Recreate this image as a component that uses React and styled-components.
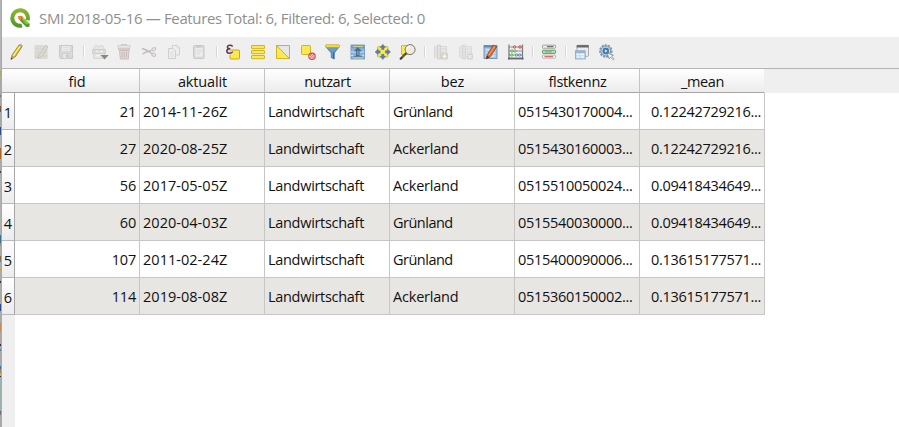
import React from "react";
import styled, { createGlobalStyle } from "styled-components";

const GlobalStyle = createGlobalStyle`
  * { box-sizing: border-box; }
  html, body { margin: 0; padding: 0; background: #fff; overflow: hidden; }
`;

const Screen = styled.div`
  display: flex;
  width: 899px;
  height: 427px;
  background: #fff;
  color: #111;
  font-family: "Open Sans", "Noto Sans", sans-serif;
  font-size: 14.5px;
  overflow: hidden;
`;

const Backdrop = styled.div`
  flex: none;
  width: 2px;
  border-right: 1px solid #a9a9a9;
  background: linear-gradient(
    #b4b4b4 0 71px, #b3a94e 71px 76px, #a9a9a9 76px 95px, #777 95px 97px, #a9a9a9 97px 106px,
    #96502f 106px 109px, #36679b 109px 112px, #a9a9a9 112px 127px, #264d86 127px 135px, #b0b0b0 135px 148px,
    #ad6424 148px 159px, #aaa 159px 171px, #444 171px 173px, #b0b0b0 173px 235px, #316f9f 235px 243px,
    #c08a55 243px 246px, #aaa 246px 256px, #9b6537 256px 259px, #4b85aa 259px 262px, #aaa 262px 268px,
    #c3a06a 268px 271px, #aaa 271px 281px, #333 281px 283px, #aaa 283px 304px, #254d94 304px 311px,
    #aaa 311px 323px, #c58b51 323px 332px, #aaa 332px 344px, #333 344px 346px, #aaa 346px 349px,
    #4d84a9 349px 351px, #aaa 351px 366px, #38719b 366px 369px, #bd8144 369px 373px, #aaa 373px 376px,
    #333 376px 377px, #9fb0b0 377px 411px, #3b6d96 411px 413px, #a86c45 413px 415px, #aaa 415px
  );
`;

const Window = styled.div`
  flex: 1;
  display: flex;
  flex-direction: column;
  min-width: 0;
`;

const TitleBar = styled.header`
  display: flex;
  align-items: center;
  flex: none;
  height: 37px;
  padding: 0 0 1px 8px;
  gap: 9px;
  color: #8f8f8f;
  svg { display: block; }
`;

const Title = styled.span`
  font-size: 15px;
  letter-spacing: -0.35px;
  white-space: pre;
`;

const Toolbar = styled.div`
  display: flex;
  align-items: center;
  flex: none;
  height: 31px;
  padding: 0 2px 2px;
  background: #efefef;
`;

const ToolButton = styled.button`
  display: grid;
  place-items: center;
  width: 25px;
  height: 24px;
  padding: 0 1px 0 0;
  border: 0;
  background: none;
  opacity: ${(p) => (p.$dim ? 0.75 : 1)};
  svg { display: block; overflow: visible; }
`;

const Separator = styled.span`
  width: 2px;
  height: 11px;
  margin: 0 2px 0 4px;
  border-left: 1px solid #d6d6d6;
  background: #fff;
`;

const Table = styled.div`
  flex: 1;
  display: flex;
  flex-direction: column;
  border-top: 1px solid #b4b4b4;
`;

const HeaderRow = styled.div`
  display: grid;
  grid-template-columns: 138px repeat(5, 125px) 1fr;
  flex: none;
  height: 24px;
  background: #efefef;
`;

const HeaderCell = styled.div`
  display: flex;
  align-items: center;
  justify-content: center;
  padding: 2px 0 0 ${(p) => (p.$first ? 13 : 1)}px;
  border-right: 1px solid ${(p) => (p.$last ? "#eee" : "#c4c4c4")};
  border-bottom: 1px solid #a6a6a6;
  background: linear-gradient(#fff, #ececec);
  line-height: 20px;
  letter-spacing: ${(p) => p.$track}px;
`;

const Body = styled.div`
  flex: 1;
  display: flex;
  flex-direction: column;
`;

const Row = styled.div`
  display: grid;
  grid-template-columns: 13px repeat(6, 125px);
  flex: none;
  width: 763px;
  height: 37px;
  background: ${(p) => (p.$alt ? "#e8e6e2" : "#fff")};
`;

const RowNumber = styled.div`
  display: flex;
  align-items: center;
  justify-content: center;
  padding-top: 3px;
  border-right: 1px solid #a6a6a6;
  border-bottom: 1px solid #b8b8b8;
  background: linear-gradient(#fff, #ececec);
`;

const Cell = styled.div`
  display: flex;
  align-items: center;
  justify-content: ${(p) => (p.$right ? "flex-end" : "flex-start")};
  padding: 1px 3px 0;
  border-right: 1px solid #c6c6c6;
  border-bottom: 1px solid #c6c6c6;
  letter-spacing: ${(p) => p.$track}px;
  white-space: nowrap;
`;

const RowGutter = styled.div`
  flex: 1;
  width: 13px;
  background: #efefef;
`;

const Y = "#fce94f";
const YB = "#c4a000";

const Icon = ({ children }) => (
  <svg width="16" height="16" viewBox="0 0 16 16" fill="none">{children}</svg>
);

const icons = {
  pencil: (
    <Icon>
      <path d="M3 15.5 4 11 11 1l3 1.6L7 13Z" fill="#e8d23a" stroke="#85752c" strokeWidth=".7" />
      <path d="m5.2 12.2 7-10" stroke="#fff388" strokeWidth="1" />
      <path d="m7 13 6.6-10" stroke="#a89125" strokeWidth=".8" />
      <path d="m11 1 1-1 2.5 1.3-.5 1.3Z" fill="#c8c8c8" stroke="#888" strokeWidth=".5" />
      <path d="m3 15.5.8-4 3 1.5Z" fill="#aaa28a" />
      <path d="m2.8 15.8.5-2.2 1.2.7Z" fill="#333" />
    </Icon>
  ),
  multiEdit: (
    <Icon>
      <path d="M1.5 2.5h12M1.5 6.5h13M1.5 10.5h13M1.5 13.5h13" stroke="#d6d4c8" strokeWidth="3" />
      <path d="M1.5 4.5h12M1.5 8.5h13M1.5 12h13" stroke="#c5c3b8" strokeWidth=".8" />
      <path d="m5 14.5 1-3.5 7-9.5 2 1.3L8 13Z" fill="#dcd6d0" stroke="#b2aaa5" strokeWidth=".8" />
    </Icon>
  ),
  save: (
    <Icon>
      <path d="M1.5 1.5h13v13h-12l-1-1Z" fill="#cfd0d1" stroke="#bbb" />
      <path d="M4 2h8v5H4Z" fill="#ececec" /><path d="M5 3.5h6M5 5.5h6" stroke="#d0d0d0" strokeWidth=".7" />
      <path d="M4.5 9.5h7v5h-7Z" fill="#e3e3e3" stroke="#bbb" strokeWidth=".6" /><path d="M8.5 10.5h2v3h-2Z" fill="#aaa" />
      <path d="m10 12 3-4 2 1.2-3 4Z" fill="#d9d4ce" />
    </Icon>
  ),
  addFeature: (
    <Icon>
      <path d="M3 4c0-3 4-3 5-1 1-2 5-2 5 1v2H3Z" fill="#e4e3df" stroke="#c7c6c2" strokeWidth=".7" />
      <path d="M1.5 5.5h13v4h-13Z" fill="#d4d3cf" stroke="#bdbcb8" strokeWidth=".7" />
      <path d="M2.5 9.5h11v5h-11Z" fill="#e3e2de" stroke="#c4c3bf" strokeWidth=".7" />
      <path d="M5 7.5h2m2 0h3M5 11.5h4" stroke="#f4f4f4" strokeWidth="1.4" />
      <path d="M9.5 11h8.2l-4.1 4.6Z" fill="#66655f" />
    </Icon>
  ),
  trash: (
    <Icon>
      <path d="M2 3.5V1.8h12v1.7M5.5 1.5V.5h5v1" stroke="#c7c0ba" strokeWidth="1.1" />
      <path d="M2.5 4h11v2h-11Z" fill="#dbc8c1" stroke="#b9a7a0" strokeWidth=".6" />
      <path d="M3.5 6.5h9.5l-.7 8.5h-8Z" fill="#e3d3d0" stroke="#b6a5a1" strokeWidth=".8" />
      <path d="M6 7.5v6M8.2 7.5v6M10.5 7.5v6" stroke="#b6a3a0" strokeWidth="1" />
    </Icon>
  ),
  cut: (
    <Icon>
      <path d="M1 4.5c3 .6 6.5 2.5 10 5.3M1.5 10c3-2 6-2.8 9-3.5" stroke="#aeaeae" strokeWidth="1.3" />
      <ellipse cx="12.7" cy="5.2" rx="2" ry="1.4" transform="rotate(-25 12.7 5.2)" stroke="#beb0ae" strokeWidth="1.1" />
      <ellipse cx="12.7" cy="10.8" rx="2" ry="1.5" transform="rotate(30 12.7 10.8)" stroke="#beb0ae" strokeWidth="1.1" />
    </Icon>
  ),
  copy: (
    <Icon>
      <path d="M6.5 1.5h4.5l2.5 2.5v7h-7Z" fill="#eee" stroke="#c9c9c9" />
      <path d="M2.5 4.5H7L9.5 7v7.5h-7Z" fill="#eee" stroke="#c3c3c3" />
      <path d="M4 8h4M4 10h4M4 12h4M11 1.5V4h2.5" stroke="#cfcfcf" strokeWidth=".7" />
    </Icon>
  ),
  paste: (
    <Icon>
      <rect x="2.5" y="1.5" width="10.5" height="13" rx="1" fill="#d4d4d1" stroke="#bdbcb9" />
      <path d="M4.5 4h7v8.5h-7Z" fill="#eee" /><path d="M5.5 1h4.8v2.5H5.5Z" fill="#bcbcba" />
      <path d="M5.5 6h5M5.5 8h5M5.5 10h3" stroke="#c9c9c9" strokeWidth=".8" />
    </Icon>
  ),
  expression: (
    <Icon>
      <rect x="6" y="6" width="9.5" height="9" rx="1" fill={Y} stroke={YB} strokeWidth=".9" />
      <path d="M8.7 2.4C6.8.7 3.5 1 3.4 3c0 1.4 1.5 1.8 3 1.8-2 0-3.6.6-3.6 2.4 0 2.4 4.3 2.7 6 .4" stroke="#f5f0ed" strokeWidth="3" />
      <path d="M8.7 2.4C6.8.7 3.5 1 3.4 3c0 1.4 1.5 1.8 3 1.8-2 0-3.6.6-3.6 2.4 0 2.4 4.3 2.7 6 .4" stroke="#5d345f" strokeWidth="1.5" />
    </Icon>
  ),
  selectAll: (
    <Icon>{[1.5, 6.5, 11.5].map((y) => <rect key={y} x="2.5" y={y} width="13" height="3.2" rx=".5" fill={Y} stroke="#cdae18" strokeWidth=".9" />)}</Icon>
  ),
  invert: (
    <Icon>
      <path d="M2.5 1.5h13v13Z" fill="#e6e6e6" stroke="#a4a4a4" strokeWidth=".9" />
      <path d="M2.5 1.5v13h13Z" fill={Y} stroke="#cdae18" strokeWidth=".9" />
    </Icon>
  ),
  deselect: (
    <Icon>
      <rect x="2.5" y="1.5" width="9" height="9" rx=".8" fill={Y} stroke="#cdae18" strokeWidth=".9" />
      <circle cx="13" cy="12.3" r="3.2" fill="#fbd8d8" stroke="#da3f48" strokeWidth="1.1" />
      <path d="m10.8 14.5 4.4-4.4M10.8 12l2-2M13 14.6l2.2-2.3" stroke="#da3f48" strokeWidth=".9" />
    </Icon>
  ),
  filter: (
    <Icon>
      <path d="M2 3h13l-4.7 6v6l-3-1.3V9Z" fill="#6a9bc9" stroke="#456f9e" strokeWidth=".8" />
      <path d="M9.5 8v6" stroke="#3c6796" />
      <rect x="1.5" y=".8" width="14" height="2.6" rx=".8" fill="#f7e23f" stroke="#b29d25" strokeWidth=".7" />
    </Icon>
  ),
  moveTop: (
    <Icon>
      <rect x="2" y="1" width="13.5" height="14" fill="#8cb2d8" stroke="#6d96bd" strokeWidth=".8" />
      <rect x="2" y="1" width="13.5" height="3.2" fill="#709dc8" /><path d="M4 2.5h10" stroke="#dfe077" strokeWidth=".8" />
      <path d="M2 8h13M2 11.5h13" stroke="#d6e4f1" strokeWidth=".9" />
      <path d="M4 14h10" stroke="#e6dc6a" strokeWidth=".8" />
      <path d="m8.8 3 4 4.2h-2.3v4.3h2.5v1.3H4.6v-1.3H7V7.2H4.8Z" fill="#466f96" />
      <path d="M7.8 8h2m-2 2h2" stroke="#e5eff8" strokeWidth=".6" />
    </Icon>
  ),
  pan: (
    <Icon>
      <rect x="3.5" y="2.5" width="10.5" height="10.5" rx="1" fill={Y} stroke="#cdae18" strokeWidth=".8" />
      <path d="m8.8.3 2.8 3.2H10v2H7.6v-2H6ZM8.8 15.5l2.8-3.2H10v-2H7.6v2H6ZM1 7.9l3.2-2.8v1.6h2v2.4h-2v1.6ZM16.6 7.9l-3.2-2.8v1.6h-2v2.4h2v1.6Z" fill="#5681ae" stroke="#4a709b" strokeWidth=".4" />
    </Icon>
  ),
  zoomSel: (
    <Icon>
      <path d="M2.5 1.5h8v9h-8Z" fill={Y} stroke="#cdae18" strokeWidth=".8" />
      <path d="m7.2 9.3-5.5 5.4" stroke="#37352f" strokeWidth="2.2" strokeLinecap="round" />
      <path d="m3 13.5 3-3" stroke="#b59b5b" strokeWidth=".8" />
      <circle cx="11.1" cy="5.6" r="5" fill="#eeeae0" stroke="#77756f" />
      <path d="M8 5a3.5 3.5 0 0 1 3-2.7" stroke="#fff" />
    </Icon>
  ),
  newField: (
    <Icon>
      <path d="M2.5 2.5h12v11h-12Z" fill="#e7e6e4" stroke="#d0d0cd" /><path d="M5.5 1h3v14h-3Z" fill="#dedcd2" stroke="#c5c3ba" strokeWidth=".8" />
      <path d="M3 5h2M3 8h2M3 11h2M9 5h5M9 8h5" stroke="#d0cfca" />
      <rect x="9" y="9" width="7" height="6.5" rx="1" fill="#ccc8b7" /><path d="M12.5 10v4.5M10.3 12.3h4.4m-3.7-1.6 3 3m0-3-3 3" stroke="#fff" strokeWidth=".8" />
    </Icon>
  ),
  deleteField: (
    <Icon>
      <path d="M2.5 2.5h12v11h-12Z" fill="#e7e7e7" stroke="#d5d5d5" /><path d="M5.5 1h3v14h-3Z" fill="#dedede" stroke="#cbcbcb" strokeWidth=".8" />
      <path d="M3 5h2M3 8h2M3 11h2M9 5h5M9 8h5" stroke="#d5d5d5" />
      <rect x="10" y="9.5" width="6" height="6" rx="1" fill="#d1c9c7" /><path d="m11.5 11 3 3m0-3-3 3" stroke="#fff" />
    </Icon>
  ),
  organize: (
    <Icon>
      <rect x="2" y="1.5" width="13" height="13" fill="#a9c8e5" stroke="#6692bb" strokeWidth=".9" />
      <path d="M2 2.5h13" stroke="#598bbd" strokeWidth="2" /><path d="M4 6h9M4 9h9M4 12h9" stroke="#e5eff9" strokeWidth="1.2" />
      <path d="m4.3 14.8 1-4.3 6-9.5 3.3 2-6.2 9.6Z" fill="#dd7138" stroke="#8d3f1f" strokeWidth=".8" />
      <path d="m7 11 5.8-9" stroke="#f5a266" /><path d="m4.3 14.8.6-3 2.5 1.5Z" fill="#403020" />
    </Icon>
  ),
  abacus: (
    <Icon>
      <path d="M2 .5v15M15.5.5v15" stroke="#777" strokeWidth="1.2" />
      <path d="M1.5 3h14.5M1.5 7h14.5M1.5 11h14.5" stroke="#888" strokeWidth=".9" /><path d="M1 14.5h15.5" stroke="#656565" strokeWidth="1.8" />
      <g strokeWidth=".8">
        <circle cx="7.5" cy="3" r="1.3" fill="#f2a4a4" stroke="#cf4444" /><circle cx="13" cy="3" r="1.3" fill="#f2a4a4" stroke="#cf4444" />
        <circle cx="5" cy="7" r="1.2" fill="#b5e7b5" stroke="#58a85c" /><circle cx="8" cy="7" r="1.2" fill="#b5e7b5" stroke="#58a85c" />
        <circle cx="9.5" cy="11" r="1.2" fill="#b9d5ed" stroke="#5284ae" /><circle cx="12.7" cy="11" r="1.2" fill="#b9d5ed" stroke="#5284ae" />
        <circle cx="4.8" cy="11" r="1.2" fill="#b5e7b5" stroke="#58a85c" />
      </g>
    </Icon>
  ),
  conditional: (
    <Icon>
      <rect x="2.5" y="1.2" width="13" height="3" rx=".6" fill="#f4f4f4" stroke="#8b8b8b" strokeWidth=".8" />
      <rect x="2.5" y="6.2" width="13" height="3.2" rx=".6" fill="#b4e5b4" stroke="#659b66" strokeWidth="1" />
      <rect x="2.5" y="11.2" width="13" height="3" rx=".6" fill="#f4f4f4" stroke="#aaa" strokeWidth=".8" />
      <path d="M7 2.7h6.5" stroke="#555" strokeWidth="1" /><path d="M5 7.8h7" stroke="#71a773" strokeWidth="1" /><path d="M4.5 12.7H13" stroke="#d84a48" strokeWidth="1" />
    </Icon>
  ),
  dock: (
    <Icon>
      <rect x="4" y="1.3" width="11.5" height="11" rx=".8" fill="#ececec" stroke="#999" strokeWidth=".8" />
      <path d="M3.7 2.3h12" stroke="#6a6a6a" strokeWidth="2.4" />
      <rect x="2.4" y="6.8" width="9.8" height="8.2" fill="#c5def4" stroke="#7fa5c9" strokeWidth=".8" />
      <path d="M2.5 8h9.5" stroke="#82abd2" strokeWidth="1.5" /><path d="M4 10.5h2M4 13h2M7.5 10.5h3.5M7.5 13h3.5" stroke="#fff" strokeWidth="1.2" />
    </Icon>
  ),
  actions: (
    <Icon>
      <circle cx="7.8" cy="7" r="6" stroke="#7d8fa1" strokeWidth="1.4" strokeDasharray="2.2 1.1" />
      <circle cx="7.8" cy="7" r="5" fill="#b9d1e7" stroke="#718a9f" strokeWidth=".9" />
      <circle cx="7.8" cy="7" r="3.2" fill="#3d76b2" /><path d="m6.9 5.2 2.7 1.8-2.7 1.8Z" fill="#dbeaf7" />
      <path d="m9.2 9 6.2 2.2-2 .9 2.8 2.7-1 .9-2.8-2.7-1.2 1.8Z" fill="#fff" stroke="#777" strokeWidth=".7" />
    </Icon>
  ),
};

const toolGroups = [
  ["pencil", "multiEdit", "save"],
  ["addFeature", "trash", "cut", "copy", "paste"],
  ["expression", "selectAll", "invert", "deselect", "filter", "moveTop", "pan", "zoomSel"],
  ["newField", "deleteField", "organize", "abacus"],
  ["conditional"],
  ["dock", "actions"],
];
const disabled = ["multiEdit", "save", "addFeature", "trash", "cut", "copy", "paste", "newField", "deleteField"];

const columns = [["fid", -0.1], ["aktualit", -0.15], ["nutzart", -0.35], ["bez", -0.1], ["flstkennz", -0.35], ["_mean", -0.4]];
const rows = [
  ["21", "2014-11-26Z", "Landwirtschaft", "Grünland", "0515430170004...", "0.12242729216..."],
  ["27", "2020-08-25Z", "Landwirtschaft", "Ackerland", "0515430160003...", "0.12242729216..."],
  ["56", "2017-05-05Z", "Landwirtschaft", "Ackerland", "0515510050024...", "0.09418434649..."],
  ["60", "2020-04-03Z", "Landwirtschaft", "Grünland", "0515540030000...", "0.09418434649..."],
  ["107", "2011-02-24Z", "Landwirtschaft", "Grünland", "0515400090006...", "0.13615177571..."],
  ["114", "2019-08-08Z", "Landwirtschaft", "Ackerland", "0515360150002...", "0.13615177571..."],
];
const tracking = [-0.2, 0.03, -0.3, -0.2, -0.3, -0.3];
const wordTracking = { "Grünland": -0.5 };

const Logo = () => (
  <svg width="20" height="20" viewBox="0 0 20 20">
    <defs>
      <linearGradient id="ring" x1="0" y1="0" x2="0" y2="1">
        <stop stopColor="#8bb52e" /><stop offset="1" stopColor="#4f9a2c" />
      </linearGradient>
    </defs>
    <path d="M17.6 12.2A7.8 7.8 0 1 0 12 17.6" fill="none" stroke="url(#ring)" strokeWidth="4" />
    <path d="m9.5 10.2 2.6-.4 7.6 6.3-.3 2.7-3.2.2-6.3-6.6Z" fill="#4f982d" />
    <path d="m11.7 11 2.8-.4 5 5.2-3.6.6Z" fill="#92bc38" />
    <path d="m8 8 4-.2 2 2.4-2.8.4-.4 2.2-2.4-1.7Z" fill="#ed8024" />
  </svg>
);

export default function App() {
  return (
    <>
      <GlobalStyle />
      <Screen>
        <Backdrop />
        <Window>
          <TitleBar>
            <Logo />
            <Title>SMI 2018-05-16 — Features Total: 6, Filtered: 6, Selected: 0</Title>
          </TitleBar>
          <Toolbar>
            {toolGroups.map((group, i) => (
              <React.Fragment key={group[0]}>
                {i > 0 && <Separator />}
                {group.map((name) => (
                  <ToolButton key={name} $dim={disabled.includes(name)} aria-label={name}>{icons[name]}</ToolButton>
                ))}
              </React.Fragment>
            ))}
          </Toolbar>
          <Table>
            <HeaderRow>
              {columns.map(([name, track], i) => (
                <HeaderCell key={name} $first={i === 0} $last={i === 5} $track={track}>{name}</HeaderCell>
              ))}
            </HeaderRow>
            <Body>
              {rows.map((row, r) => (
                <Row key={row[0]} $alt={r % 2 === 1}>
                  <RowNumber>{r + 1}</RowNumber>
                  {row.map((value, c) => (
                    <Cell key={c} $right={c === 0 || c === 5} $track={wordTracking[value] ?? tracking[c]}>{value}</Cell>
                  ))}
                </Row>
              ))}
              <RowGutter />
            </Body>
          </Table>
        </Window>
      </Screen>
    </>
  );
}
